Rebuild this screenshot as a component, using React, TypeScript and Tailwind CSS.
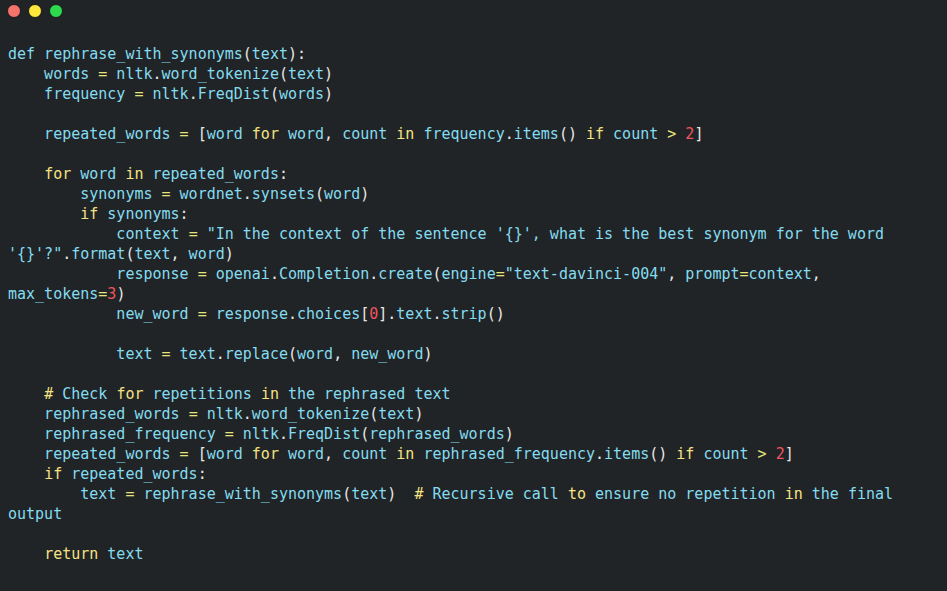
const lines: string[] = [
  "def rephrase_with_synonyms(text):",
  "    words = nltk.word_tokenize(text)",
  "    frequency = nltk.FreqDist(words)",
  "",
  "    repeated_words = [word ~for~ word, count ~in~ frequency.items() ~if~ count > ^2^]",
  "",
  "    ~for~ word ~in~ repeated_words:",
  "        synonyms = wordnet.synsets(word)",
  "        ~if~ synonyms:",
  "            context = `\"In the context of the sentence '{}', what is the best synonym for the word`",
  "`'{}'?\"`.format(text, word)",
  "            response = openai.Completion.create(engine=`\"text-davinci-004\"`, prompt=context,",
  "max_tokens=^3^)",
  "            new_word = response.choices[^0^].text.strip()",
  "",
  "            text = text.replace(word, new_word)",
  "",
  "    ~#~ Check ~for~ repetitions ~in~ the rephrased text",
  "    rephrased_words = nltk.word_tokenize(text)",
  "    rephrased_frequency = nltk.FreqDist(rephrased_words)",
  "    repeated_words = [word ~for~ word, count ~in~ rephrased_frequency.items() ~if~ count > ^2^]",
  "    ~if~ repeated_words:",
  "        text = rephrase_with_synonyms(text)  ~#~ Recursive call ~to~ ensure no repetition ~in~ the final",
  "output",
  "",
  "    ~return~ text",
];

function CodeLine({ line }: { line: string }) {
  const parts = line.split(/(~[^~]+~|\^[^^]+\^|`[^`]*`|[=>]|[()\[\],.:])/).filter((p) => p !== "");
  return (
    <div className="h-5">
      {parts.map((p, i) => {
        if (p.startsWith("~")) return <span key={i} className="text-[#f5e283]">{p.slice(1, -1)}</span>;
        if (p.startsWith("^")) return <span key={i} className="text-[#f0545c]">{p.slice(1, -1)}</span>;
        if (p.startsWith("`")) return <span key={i} className="text-[#84dcf0]">{p.slice(1, -1)}</span>;
        if (p === "=" || p === ">") return <span key={i} className="text-[#e6e47a]">{p}</span>;
        if (/^[()\[\],.:]$/.test(p)) return <span key={i} className="text-[#e8e8e8]">{p}</span>;
        return <span key={i} className="text-[#84dcf0]">{p}</span>;
      })}
    </div>
  );
}

export default function App() {
  return (
    <div className="w-[947px] h-[591px] bg-[#212426] overflow-hidden">
      {/* window controls */}
      <div className="flex gap-[7px] pl-[7px] pt-1">
        <div className="w-[14px] h-[14px] rounded-full bg-[#f4736b] border border-[#1a1a1a]" />
        <div className="w-[14px] h-[14px] rounded-full bg-[#fde83b] border border-[#1a1a1a]" />
        <div className="w-[14px] h-[14px] rounded-full bg-[#2fd94f] border border-[#1a1a1a]" />
      </div>

      <div className="mt-[26px] pl-2 whitespace-pre font-['DejaVu_Sans_Mono',monospace] text-[15px] leading-5">
        {lines.map((line, i) => (
          <CodeLine key={i} line={line} />
        ))}
      </div>
    </div>
  );
}
